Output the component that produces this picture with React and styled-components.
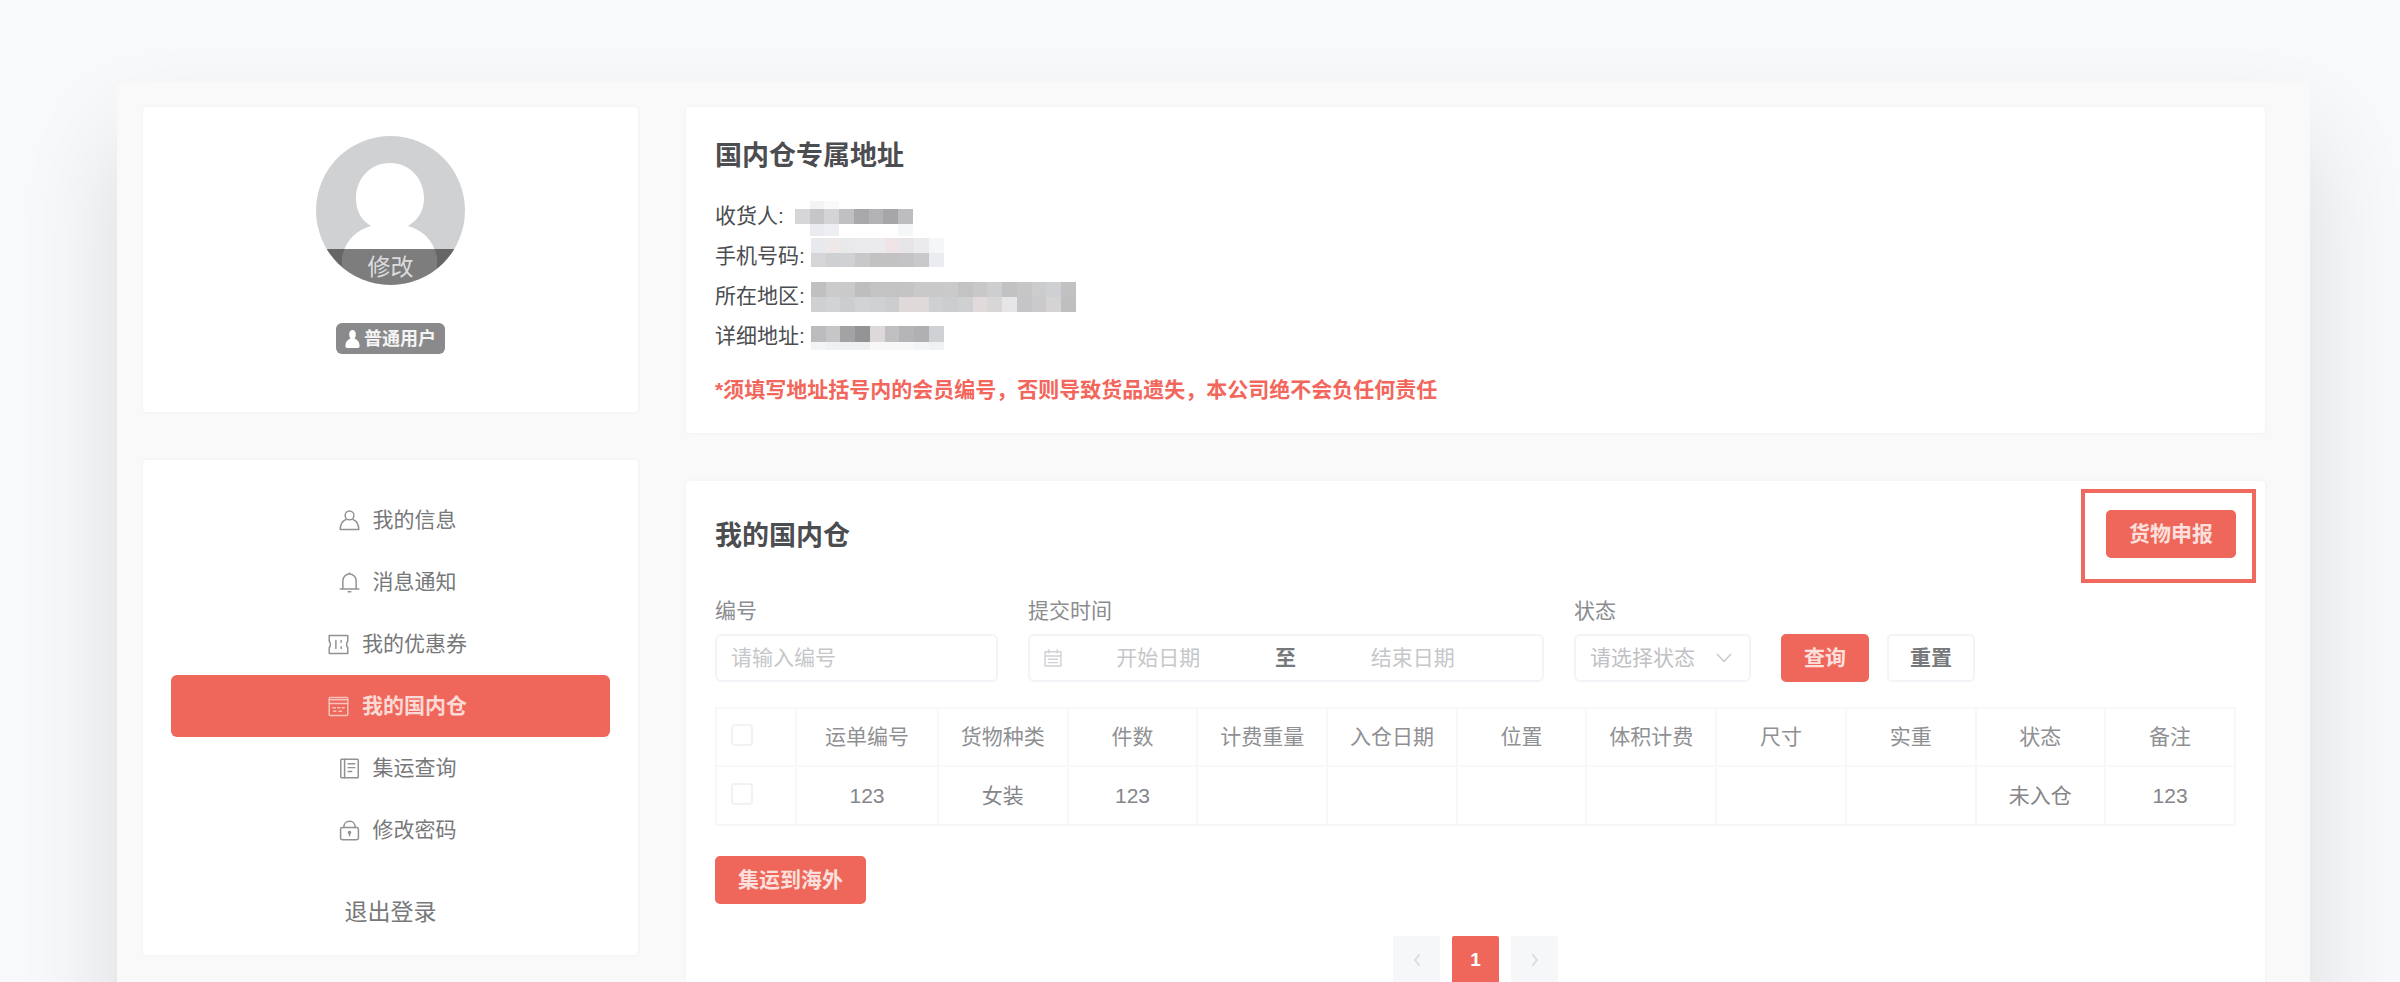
import React from "react";
import styled, { createGlobalStyle, css } from "styled-components";

const red = "#ef675b";
const fontStack = `"Liberation Sans", "Noto Sans CJK SC", sans-serif`;

const GlobalStyle = createGlobalStyle`
  *, *::before, *::after { box-sizing: border-box; }
  body {
    margin: 0;
    background: #f7f9fb;
    color: #5c5d60;
    font-family: ${fontStack};
    font-size: 21px;
    line-height: 30px;
  }
  button, input, select { font: inherit; color: inherit; }
  h2, p, dl, dd { margin: 0; }
`;

const Page = styled.div`
  min-height: 100vh;
  padding: 82px 90px 0 117px;
  overflow: hidden;
`;

const Panel = styled.div`
  display: flex;
  align-items: flex-start;
  gap: 44px;
  padding: 23px 43px 0 24px;
  background: #f9f9f9;
  border-radius: 6px;
  box-shadow: 0 56px 100px rgba(0, 0, 0, 0.12);
`;

const Sidebar = styled.aside`
  flex: 0 0 499px;
  display: flex;
  flex-direction: column;
  gap: 44px;
`;

const Content = styled.main`
  flex: 1;
  min-width: 0;
  display: flex;
  flex-direction: column;
  gap: 44px;
`;

const Card = styled.section`
  background: #fff;
  border: 2px solid #f4f6f9;
  border-radius: 6px;
`;

const ProfileCard = styled(Card)`
  display: flex;
  flex-direction: column;
  align-items: center;
  gap: 38px;
  padding: 29px 28px 58px;
`;

const Avatar = styled.div`
  position: relative;
  width: 149px;
  height: 149px;
  border-radius: 50%;
  overflow: hidden;
  background: #d0d1d3;

  svg { display: block; width: 100%; height: 100%; }
`;

const AvatarEdit = styled.button`
  position: absolute;
  left: 0;
  right: 0;
  bottom: 0;
  width: 100%;
  height: 36px;
  padding: 0;
  border: 0;
  background: rgba(0, 0, 0, 0.51);
  color: #dcdcdd;
  font-size: 23px;
  line-height: 36px;
`;

const Badge = styled.span`
  display: flex;
  align-items: center;
  gap: 4px;
  height: 31px;
  padding: 0 9px;
  border-radius: 6px;
  background: #8a8a8c;
  color: #f4f4f4;
  font-size: 18px;
  font-weight: 700;

  svg { width: 15px; height: 18px; }
`;

const MenuCard = styled(Card)`
  display: flex;
  flex-direction: column;
  padding: 29px 28px 12px;
`;

const MenuLink = styled.a`
  display: flex;
  align-items: center;
  justify-content: center;
  gap: 13px;
  height: 62px;
  padding-left: 14px;
  border-radius: 6px;
  color: #77787a;
  text-decoration: none;

  svg { width: 21px; height: 21px; opacity: 0.8; }

  ${(p) =>
    p.$active &&
    css`
      background: ${red};
      color: #fcd9d5;
      font-weight: 700;
    `}
`;

const LogoutButton = styled.button`
  height: 62px;
  margin-top: 20px;
  border: 0;
  background: none;
  color: #77787a;
  font-size: 23px;
`;

const AddressCard = styled(Card)`
  padding: 31px 29px 23px;
`;

const Title = styled.h2`
  color: #4c4d50;
  font-size: 27px;
  line-height: 36px;
  font-weight: 700;
`;

const AddressList = styled.dl`
  margin-top: 22px;
`;

const AddressRow = styled.div`
  display: flex;
  gap: 6px;
  height: 40px;
  line-height: 40px;
  color: #4c4d50;

  dd { flex: 1; }
  svg { display: block; }
`;

const Notice = styled.p`
  margin-top: 14px;
  line-height: 40px;
  color: #f2665b;
  font-weight: 700;
`;

const WarehouseCard = styled(Card)`
  padding: 29px 29px 60px;
`;

const CardHeader = styled.header`
  display: flex;
  align-items: flex-end;
  justify-content: space-between;

  ${Title} { line-height: 44px; }
`;

const Highlight = styled.div`
  position: relative;

  &::after {
    content: "";
    position: absolute;
    inset: -21px -20px -25px -25px;
    border: 4px solid #f0695e;
    pointer-events: none;
  }
`;

const Button = styled.button`
  height: 48px;
  padding: 0 21px;
  border: ${(p) => (p.$plain ? "2px solid #f3f4f7" : `2px solid ${red}`)};
  border-radius: 5px;
  background: ${(p) => (p.$plain ? "#fff" : red)};
  color: ${(p) => (p.$plain ? "#77787a" : "#fce0dd")};
  font-weight: 700;
  white-space: nowrap;
`;

const Filters = styled.form`
  display: flex;
  align-items: flex-end;
  gap: 30px;
  margin-top: 38px;
`;

const Field = styled.div`
  display: flex;
  flex-direction: column;
  gap: 8px;
  width: ${(p) => p.$width}px;
  color: #8b8c8f;
`;

const control = css`
  width: 100%;
  height: 48px;
  border: 2px solid #f3f4f7;
  border-radius: 6px;
  background: #fff;
`;

const TextInput = styled.input`
  ${control}
  padding: 0 14px;

  &::placeholder { color: #c6c7ca; opacity: 1; }
`;

const DateRange = styled.div`
  ${control}
  display: flex;
  align-items: center;
  padding: 0 34px 0 13px;

  svg { flex: none; width: 20px; height: 20px; color: #cfd1d6; }
  span { flex: none; width: 64px; text-align: center; color: #77787a; font-weight: 700; }
`;

const DateInput = styled.input`
  flex: 1;
  min-width: 0;
  padding: 0;
  border: 0;
  background: none;
  text-align: center;

  &::placeholder { color: #c6c7ca; opacity: 1; }
`;

const SelectBox = styled.div`
  position: relative;

  select {
    ${control}
    display: block;
    appearance: none;
    padding: 0 34px 0 14px;
    color: #c0c1c4;
  }

  svg {
    position: absolute;
    right: 18px;
    top: 16px;
    width: 18px;
    height: 16px;
    color: #cbcdd1;
    pointer-events: none;
  }
`;

const FilterActions = styled.div`
  display: flex;
  gap: 18px;
`;

const Table = styled.table`
  width: 100%;
  margin-top: 25px;
  border-collapse: collapse;
  table-layout: fixed;
  color: #858689;

  th, td {
    height: 59px;
    padding: 0;
    border: 2px solid #f7f8f9;
    font-weight: 400;
    text-align: center;
  }

  th { height: 58px; color: #8f9093; }

  th:first-child, td:first-child {
    width: 80px;
    padding: 0 0 4px 14px;
    text-align: left;
  }

  th:nth-child(2) { width: 142px; }
`;

const Checkbox = styled.input`
  appearance: none;
  display: block;
  width: 22px;
  height: 22px;
  margin: 0;
  border: 2px solid #f1f2f4;
  border-radius: 4px;
  background: #fff;

  &:checked { background: ${red}; }
`;

const TableActions = styled.div`
  margin-top: 30px;
`;

const Pagination = styled.nav`
  display: flex;
  justify-content: center;
  gap: 12px;
  margin-top: 32px;
`;

const PageButton = styled.button`
  display: flex;
  align-items: center;
  justify-content: center;
  width: 47px;
  height: 48px;
  padding: 0;
  border: 0;
  border-radius: 2px;
  background: ${(p) => (p.$current ? red : "#f6f7f9")};
  color: ${(p) => (p.$current ? "#fff" : "#d6d8dc")};
  font-size: 19px;
  font-weight: 700;

  svg { width: 16px; height: 16px; }
`;

const Icon = ({ children, box = "0 0 24 24" }) => (
  <svg
    viewBox={box}
    fill="none"
    stroke="currentColor"
    strokeWidth="1.7"
    strokeLinecap="round"
    strokeLinejoin="round"
    aria-hidden="true"
  >
    {children}
  </svg>
);

const icons = {
  user: (
    <Icon>
      <circle cx="12" cy="6.2" r="5" />
      <path d="M8 10.800C4.200 12 1.600 15.600 1.400 22.400h21.200c-.2-6.800-2.800-10.400-6.600-11.600" />
    </Icon>
  ),
  bell: (
    <Icon>
      <path d="M4.400 19.400V10a7.600 7.600 0 0 1 15.200 0v9.400M1.400 19.400h21.200M10.500 22.600h3M12 2.400V1" />
    </Icon>
  ),
  ticket: (
    <Icon>
      <path d="M1.400 1.800h21.200v6.600c-1.800 1.400-1.800 5.800 0 7.200v6.600H1.400v-6.600c1.800-1.400 1.800-5.800 0-7.200zM9 7.500v9M15 7.500v2M15 14.500v2" />
    </Icon>
  ),
  warehouse: (
    <Icon>
      <rect x="1.400" y="1.800" width="21.200" height="20.400" rx="1" />
      <path d="M1.400 4.200h21.200M1.400 8.500h21.200M5.500 13.500h3M11 13.500h2.500M16 13.500h2.500M6.500 17.500h2.500M12.500 17.500h3" />
    </Icon>
  ),
  list: (
    <Icon>
      <rect x="2" y="1.400" width="20" height="21.200" rx="1" />
      <path d="M6.400 1.400v21.200M10.500 6.500h7.500M10.500 11h7.500M10.500 15.500h4" />
    </Icon>
  ),
  lock: (
    <Icon>
      <rect x="1.800" y="8.500" width="20.400" height="14" rx="2" />
      <path d="M5.500 8.500C5.500 4.500 8 1.400 12 1.400s6.500 3.100 6.500 7.100M12 14.500v3.500" />
      <circle cx="12" cy="14.200" r="1.200" fill="currentColor" />
    </Icon>
  ),
};

const menu = [
  ["user", "我的信息"],
  ["bell", "消息通知"],
  ["ticket", "我的优惠券"],
  ["warehouse", "我的国内仓"],
  ["list", "集运查询"],
  ["lock", "修改密码"],
];

/* Masked values: runs of tiles, each run is [x in tiles, y, height, ...colours]. */
const TILE = 15;
const addressRows = [
  {
    label: "收货人:",
    inset: 5,
    runs: [
      [1, 5, 8, "#f3f4f6", "#fafafb"],
      [0, 13, 15, "#d6d6d8", "#c6c6c8", "#d3d4d6", "#c0c0c2", "#a8a8ab", "#b3b3b5", "#a6a6a9", "#bdbdbf"],
      [1, 28, 12, "#e9ebee", "#edeff2"],
      [7, 28, 12, "#f5f6f8"],
    ],
  },
  {
    label: "手机号码:",
    inset: 0,
    runs: [
      [0, 2, 15, "#e8e9ec", "#efe8e9", "#e8e9eb", "#ebebed", "#ebebed", "#efe4e5", "#e6e6e8", "#ebebed", "#f5f6f8"],
      [0, 17, 14, "#d5d5d8", "#cfd0d3", "#d0d1d3", "#c8c8ca", "#c2c2c3", "#c2c2c3", "#c4c4c6", "#c9c9cb", "#ebecef"],
    ],
  },
  {
    label: "所在地区:",
    inset: 0,
    runs: [
      [0, 6, 15, "#c0c0c1", "#cacbcd", "#cacacb", "#bebebf", "#c3c3c4", "#c3c3c4", "#c4c4c5", "#c9c9ca", "#c9c9ca", "#cacacb", "#c3c3c4", "#c8c8c9", "#cdced0", "#c2c2c3", "#c6c6c7", "#cbccce", "#cfd0d3", "#c1c1c2"],
      [0, 21, 15, "#cfd0d2", "#d2d3d5", "#cccdce", "#d2d3d5", "#d0d1d3", "#cccdce", "#e0d9da", "#e0d9da", "#cfd0d2", "#cccdce", "#cfd0d2", "#e0dadb", "#d9d6d8", "#e6e6e8", "#c4c5c7", "#cacacc", "#d6d3d5", "#bfbfc0"],
    ],
  },
  {
    label: "详细地址:",
    inset: 0,
    runs: [
      [0, 10, 16, "#bcbcbe", "#c6c6c7", "#a3a3a5", "#949497", "#ddd8da", "#c0c0c2", "#b5b5b7", "#b0b0b2", "#d0d1d4"],
      [0, 26, 8, "#f3f4f6", "#eef0f2", "#eef0f2", "#eef0f2", "#f8f8f9", "#f8f8f9", "#f8f8f9", "#f3f4f6", "#eff1f3"],
    ],
  },
];

const Mosaic = ({ runs, inset }) => (
  <svg width="270" height="40" role="img" aria-label="已隐藏">
    {runs.map(([x, y, h, ...colours], r) =>
      colours.map((colour, i) => (
        <rect
          key={`${r}-${i}`}
          x={inset + Math.round((x + i) * (TILE - 0.3))}
          y={y}
          width={TILE}
          height={h}
          fill={colour}
        />
      ))
    )}
  </svg>
);

const columns = ["运单编号", "货物种类", "件数", "计费重量", "入仓日期", "位置", "体积计费", "尺寸", "实重", "状态", "备注"];
const rows = [["123", "女装", "123", "", "", "", "", "", "", "未入仓", "123"]];

export default function App() {
  return (
    <>
      <GlobalStyle />
      <Page>
        <Panel>
          <Sidebar>
            <ProfileCard>
              <Avatar>
                <svg viewBox="0 0 149 149" aria-hidden="true">
                  <path
                    d="M74 27c20 0 34 16 34 35 0 13-6 22-16 28 14 4 25 13 29 31v28H26v-28c4-18 15-27 29-31-10-6-15-15-15-28 0-19 14-35 34-35z"
                    fill="#fff"
                  />
                </svg>
                <AvatarEdit type="button">修改</AvatarEdit>
              </Avatar>
              <Badge>
                <svg viewBox="0 0 15 18" fill="#fff" aria-hidden="true">
                  <path d="M7.500 0C9.600 0 10.800 1.800 10.800 4c0 2-.5 3.500-1.300 4.600 3.300 1.200 5.100 3.900 5.100 7.400 0 1.300-.7 2-2 2H2.400c-1.300 0-2-.7-2-2 0-3.500 1.800-6.200 5.100-7.400C4.700 7.500 4.200 6 4.200 4c0-2.200 1.200-4 3.300-4z" />
                </svg>
                普通用户
              </Badge>
            </ProfileCard>

            <MenuCard as="nav">
              {menu.map(([icon, label]) => (
                <MenuLink
                  key={label}
                  href={`#${icon}`}
                  $active={icon === "warehouse"}
                  aria-current={icon === "warehouse" ? "page" : undefined}
                >
                  {icons[icon]}
                  {label}
                </MenuLink>
              ))}
              <LogoutButton type="button">退出登录</LogoutButton>
            </MenuCard>
          </Sidebar>

          <Content>
            <AddressCard>
              <Title>国内仓专属地址</Title>
              <AddressList>
                {addressRows.map((row) => (
                  <AddressRow key={row.label}>
                    <dt>{row.label}</dt>
                    <dd>
                      <Mosaic runs={row.runs} inset={row.inset} />
                    </dd>
                  </AddressRow>
                ))}
              </AddressList>
              <Notice>*须填写地址括号内的会员编号，否则导致货品遗失，本公司绝不会负任何责任</Notice>
            </AddressCard>

            <WarehouseCard>
              <CardHeader>
                <Title>我的国内仓</Title>
                <Highlight>
                  <Button type="button">货物申报</Button>
                </Highlight>
              </CardHeader>

              <Filters onSubmit={(e) => e.preventDefault()}>
                <Field $width={283}>
                  <label htmlFor="code">编号</label>
                  <TextInput id="code" placeholder="请输入编号" />
                </Field>
                <Field $width={516}>
                  <label htmlFor="from">提交时间</label>
                  <DateRange>
                    <Icon>
                      <path d="M2.500 4.500h19v17h-19zM2.500 9.500h19M7 2v4M17 2v4M6.500 13.500h11M6.500 17.500h11" />
                    </Icon>
                    <DateInput id="from" placeholder="开始日期" />
                    <span>至</span>
                    <DateInput aria-label="结束日期" placeholder="结束日期" />
                  </DateRange>
                </Field>
                <Field $width={177}>
                  <label htmlFor="state">状态</label>
                  <SelectBox>
                    <select id="state" defaultValue="">
                      <option value="">请选择状态</option>
                      <option value="out">未入仓</option>
                    </select>
                    <Icon box="0 0 18 16">
                      <path d="M2.500 4.500 9 11.500l6.500-7" />
                    </Icon>
                  </SelectBox>
                </Field>
                <FilterActions>
                  <Button type="submit">查询</Button>
                  <Button type="reset" $plain>重置</Button>
                </FilterActions>
              </Filters>

              <Table>
                <thead>
                  <tr>
                    <th><Checkbox type="checkbox" aria-label="全选" /></th>
                    {columns.map((c) => <th key={c} scope="col">{c}</th>)}
                  </tr>
                </thead>
                <tbody>
                  {rows.map((cells, r) => (
                    <tr key={r}>
                      <td><Checkbox type="checkbox" aria-label="选择此行" /></td>
                      {cells.map((cell, i) => <td key={i}>{cell}</td>)}
                    </tr>
                  ))}
                </tbody>
              </Table>

              <TableActions>
                <Button type="button">集运到海外</Button>
              </TableActions>

              <Pagination aria-label="分页">
                <PageButton type="button" aria-label="上一页">
                  <Icon box="0 0 16 16"><path d="M10 3 6 8l4 5" /></Icon>
                </PageButton>
                <PageButton type="button" $current aria-current="page">1</PageButton>
                <PageButton type="button" aria-label="下一页">
                  <Icon box="0 0 16 16"><path d="m6 3 4 5-4 5" /></Icon>
                </PageButton>
              </Pagination>
            </WarehouseCard>
          </Content>
        </Panel>
      </Page>
    </>
  );
}
